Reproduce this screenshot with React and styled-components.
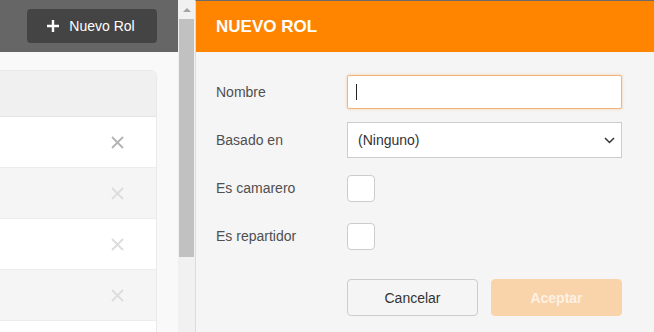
import styled, { createGlobalStyle } from "styled-components";

const GlobalStyle = createGlobalStyle`
    html, body {
        margin: 0;
        padding: 0;
        width: 654px;
        height: 332px;
        overflow: hidden;
        font-family: "Liberation Sans", Arial, sans-serif;
    }
`;

const rows = [
    { id: 1, active: true },
    { id: 2, active: false },
    { id: 3, active: false },
    { id: 4, active: false },
];

function CloseIcon({ active }) {
    return (
        <svg width="13" height="13" viewBox="0 0 13 13">
            <path
                d="M1 1 L12 12 M12 1 L1 12"
                stroke={active ? "#b3b3b3" : "#dcdcdc"}
                strokeWidth="1.8"
                fill="none"
            />
        </svg>
    );
}

export default function App() {
    return (
        <Screen>
            <GlobalStyle />
            <LeftPane>
                <TopBar>
                    <DarkButton>
                        <svg width="12" height="12" viewBox="0 0 12 12">
                            <path d="M6 0 V12 M0 6 H12" stroke="#fff" strokeWidth="2.4" />
                        </svg>
                        Nuevo Rol
                    </DarkButton>
                </TopBar>
                <ListArea>
                    <Card>
                        <CardHeader />
                        {rows.map((row, i) => (
                            <Row key={row.id} striped={i % 2 === 1}>
                                <CloseIcon active={row.active} />
                            </Row>
                        ))}
                        <Row striped={false} />
                    </Card>
                </ListArea>
            </LeftPane>

            <Scrollbar>
                <ArrowUp />
                <Thumb />
            </Scrollbar>

            <Panel>
                <PanelHeader>NUEVO ROL</PanelHeader>
                <PanelBody>
                    <FormRow>
                        <Label>Nombre</Label>
                        <TextField>
                            <Caret />
                        </TextField>
                    </FormRow>
                    <FormRow>
                        <Label>Basado en</Label>
                        <SelectBox>
                            <span>(Ninguno)</span>
                            <svg width="11" height="7" viewBox="0 0 11 7">
                                <path d="M1 1 L5.5 5.5 L10 1" stroke="#333" strokeWidth="1.5" fill="none" />
                            </svg>
                        </SelectBox>
                    </FormRow>
                    <FormRow>
                        <Label>Es camarero</Label>
                        <CheckBox />
                    </FormRow>
                    <FormRow>
                        <Label>Es repartidor</Label>
                        <CheckBox />
                    </FormRow>
                    <Actions>
                        <ActionButton>Cancelar</ActionButton>
                        <ActionButton primary>Aceptar</ActionButton>
                    </Actions>
                </PanelBody>
            </Panel>
        </Screen>
    );
}

const Screen = styled.div`
    display: flex;
    width: 654px;
    height: 332px;
    overflow: hidden;
    background-color: #f9f9f9;
`;

const LeftPane = styled.div`
    width: 178px;
    flex-shrink: 0;
    display: flex;
    flex-direction: column;
    overflow: hidden;
`;

const TopBar = styled.div`
    height: 52px;
    flex-shrink: 0;
    background-color: #666666;
    display: flex;
    align-items: center;
    justify-content: flex-end;
    padding-right: 21px;
`;

const DarkButton = styled.div`
    width: 130px;
    height: 34px;
    box-sizing: border-box;
    border-radius: 4px;
    background-color: #444444;
    color: #ffffff;
    font-size: 14px;
    display: flex;
    align-items: center;
    justify-content: center;
    gap: 10px;
    padding-right: 2px;
`;

const ListArea = styled.div`
    padding-top: 18px;
    padding-right: 21px;
    flex-shrink: 0;
`;

const Card = styled.div`
    background-color: #ffffff;
    border: 1px solid #e9e9e9;
    border-left: none;
    border-top-right-radius: 6px;
    overflow: hidden;
`;

const CardHeader = styled.div`
    height: 45px;
    background-color: #f0f0f0;
    border-bottom: 1px solid #e4e4e4;
`;

const Row = styled.div`
    height: 50px;
    border-bottom: 1px solid #ededed;
    background-color: ${p => (p.striped ? "#f5f5f5" : "#ffffff")};
    display: flex;
    align-items: center;
    justify-content: flex-end;
    padding-right: 32px;
`;

const Scrollbar = styled.div`
    width: 17px;
    flex-shrink: 0;
    background-color: #f1f1f1;
    display: flex;
    flex-direction: column;
    align-items: center;
`;

const ArrowUp = styled.div`
    margin-top: 8px;
    width: 0;
    height: 0;
    border-left: 4px solid transparent;
    border-right: 4px solid transparent;
    border-bottom: 4px solid #a3a3a3;
`;

const Thumb = styled.div`
    margin-top: 7px;
    width: 15px;
    height: 238px;
    background-color: #c1c1c1;
`;

const Panel = styled.div`
    flex: 1;
    border-left: 1px solid #dcdcdc;
    border-top: 1px solid #6b6b6b;
    background-color: #f5f5f5;
    display: flex;
    flex-direction: column;
`;

const PanelHeader = styled.div`
    height: 51px;
    flex-shrink: 0;
    background-color: #ff8400;
    color: #ffffff;
    font-weight: bold;
    font-size: 17px;
    display: flex;
    align-items: center;
    padding-left: 20px;
`;

const PanelBody = styled.div`
    padding: 16px 32px 0 20px;
    display: flex;
    flex-direction: column;
`;

const FormRow = styled.div`
    height: 48px;
    display: grid;
    grid-template-columns: 131px 1fr;
    align-items: center;
`;

const Label = styled.div`
    font-size: 14px;
    color: #4f4f4f;
`;

const TextField = styled.div`
    height: 34px;
    box-sizing: border-box;
    background-color: #ffffff;
    border: 1px solid #f4b27c;
    border-radius: 2px;
    box-shadow: 0 0 3px rgba(255, 132, 0, 0.35);
    display: flex;
    align-items: center;
    padding-left: 8px;
`;

const Caret = styled.span`
    width: 1px;
    height: 16px;
    background-color: #222222;
`;

const SelectBox = styled.div`
    height: 36px;
    box-sizing: border-box;
    background-color: #ffffff;
    border: 1px solid #cccccc;
    display: flex;
    align-items: center;
    justify-content: space-between;
    padding: 0 6px 0 10px;
    font-size: 14px;
    color: #333333;
`;

const CheckBox = styled.div`
    width: 28px;
    height: 27px;
    box-sizing: border-box;
    background-color: #ffffff;
    border: 1px solid #cccccc;
    border-radius: 4px;
`;

const Actions = styled.div`
    margin-top: 19px;
    display: grid;
    grid-template-columns: 131px 131px;
    justify-content: space-between;
    padding-left: 131px;
`;

const ActionButton = styled.div`
    height: 37px;
    box-sizing: border-box;
    border-radius: 4px;
    display: flex;
    align-items: center;
    justify-content: center;
    font-size: 14px;
    border: 1px solid ${p => (p.primary ? "#f9d4aa" : "#cccccc")};
    background-color: ${p => (p.primary ? "#f9d4aa" : "#f5f5f5")};
    color: ${p => (p.primary ? "#fdf1e4" : "#333333")};
    font-weight: ${p => (p.primary ? "bold" : "normal")};
`;
